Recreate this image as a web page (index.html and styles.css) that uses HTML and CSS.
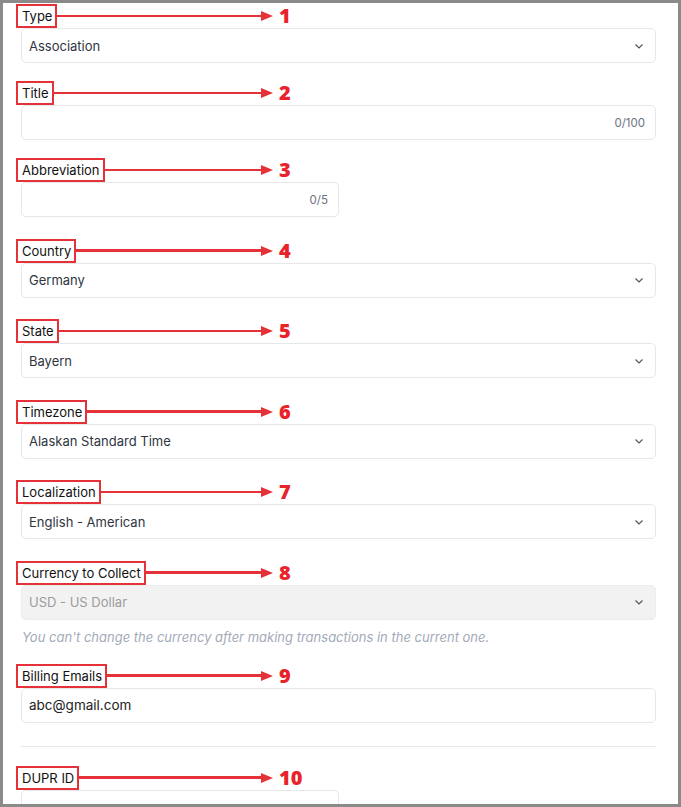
FILE: index.html
```html
<!DOCTYPE html>
<html lang="en">
<head>
    <meta charset="UTF-8">
    <title>Organization settings</title>
    <link rel="stylesheet" href="styles.css">
</head>
<body>
    <div class="frame">
        <form class="settings-form">

            <div class="field tight">
                <div class="annot"><label class="tag">Type</label><span class="arrow"></span></div><span class="num">1</span>
                <div class="box select-box">
                    <span>Association</span>
                    <svg class="chev" width="10" height="10" viewBox="0 0 10 10"><polyline points="1.5,3.5 5,7 8.5,3.5" /></svg>
                </div>
            </div>

            <div class="field tight">
                <div class="annot"><label class="tag">Title</label><span class="arrow"></span></div><span class="num">2</span>
                <div class="box">
                    <input type="text" class="plain-input">
                    <span class="counter">0/100</span>
                </div>
            </div>

            <div class="field">
                <div class="annot"><label class="tag">Abbreviation</label><span class="arrow"></span></div><span class="num">3</span>
                <div class="box half">
                    <input type="text" class="plain-input">
                    <span class="counter">0/5</span>
                </div>
            </div>

            <div class="field">
                <div class="annot"><label class="tag">Country</label><span class="arrow"></span></div><span class="num">4</span>
                <div class="box select-box">
                    <span>Germany</span>
                    <svg class="chev" width="10" height="10" viewBox="0 0 10 10"><polyline points="1.5,3.5 5,7 8.5,3.5" /></svg>
                </div>
            </div>

            <div class="field">
                <div class="annot"><label class="tag">State</label><span class="arrow"></span></div><span class="num">5</span>
                <div class="box select-box">
                    <span>Bayern</span>
                    <svg class="chev" width="10" height="10" viewBox="0 0 10 10"><polyline points="1.5,3.5 5,7 8.5,3.5" /></svg>
                </div>
            </div>

            <div class="field">
                <div class="annot"><label class="tag">Timezone</label><span class="arrow"></span></div><span class="num">6</span>
                <div class="box select-box">
                    <span>Alaskan Standard Time</span>
                    <svg class="chev" width="10" height="10" viewBox="0 0 10 10"><polyline points="1.5,3.5 5,7 8.5,3.5" /></svg>
                </div>
            </div>

            <div class="field">
                <div class="annot"><label class="tag">Localization</label><span class="arrow"></span></div><span class="num">7</span>
                <div class="box select-box">
                    <span>English - American</span>
                    <svg class="chev" width="10" height="10" viewBox="0 0 10 10"><polyline points="1.5,3.5 5,7 8.5,3.5" /></svg>
                </div>
            </div>

            <div class="field with-help">
                <div class="annot"><label class="tag">Currency to Collect</label><span class="arrow"></span></div><span class="num">8</span>
                <div class="box select-box disabled">
                    <span>USD - US Dollar</span>
                    <svg class="chev" width="10" height="10" viewBox="0 0 10 10"><polyline points="1.5,3.5 5,7 8.5,3.5" /></svg>
                </div>
                <p class="help">You can't change the currency after making transactions in the current one.</p>
            </div>

            <div class="field">
                <div class="annot"><label class="tag">Billing Emails</label><span class="arrow"></span></div><span class="num">9</span>
                <div class="box">
                    <input type="text" class="plain-input" value="abc@gmail.com">
                </div>
            </div>

            <hr class="divider">

            <div class="field">
                <div class="annot"><label class="tag">DUPR ID</label><span class="arrow"></span></div><span class="num">10</span>
                <div class="box half">
                    <input type="text" class="plain-input">
                </div>
            </div>

        </form>
    </div>
</body>
</html>
```

FILE: styles.css
```css
html, body {
    margin: 0;
    padding: 0;
    background: #fff;
}

body {
    font-family: Inter, "Noto Sans", sans-serif;
    color: #111;
}

.frame {
    box-sizing: border-box;
    width: 681px;
    height: 807px;
    border: 3px solid #8a8a8a;
    overflow: hidden;
}

.settings-form {
    padding: 1px 22px 0 18px;
}

.field {
    margin-bottom: 21.5px;
}

.field.tight {
    margin-bottom: 18px;
}

.field.with-help {
    margin-bottom: 19px;
}

/* annotation: red box round the label + arrow + number */
.annot {
    display: inline-flex;
    align-items: center;
    width: 257px;
    height: 24px;
    margin-left: -5px;
    vertical-align: top;
}

.tag {
    box-sizing: border-box;
    height: 24px;
    line-height: 20px;
    padding: 0 3px 0 4px;
    border: 2px solid #e53238;
    font-size: 13px;
    color: #111;
    white-space: nowrap;
}

.arrow {
    flex: 1;
    display: flex;
    align-items: center;
}

.arrow::before {
    content: '';
    flex: 1;
    height: 2.5px;
    background: #e53238;
}

.arrow::after {
    content: '';
    border-left: 12px solid #e53238;
    border-top: 5.5px solid transparent;
    border-bottom: 5.5px solid transparent;
}

.num {
    display: inline-block;
    height: 24px;
    line-height: 24px;
    margin-left: 6px;
    font-family: "Open Sans", sans-serif;
    font-weight: 800;
    font-size: 20px;
    color: #e8232b;
    vertical-align: top;
}

.box {
    box-sizing: border-box;
    display: flex;
    align-items: center;
    height: 35px;
    padding: 0 10px 0 7px;
    border: 1px solid #e6e7ea;
    border-radius: 5px;
    background: #fff;
    font-size: 13px;
    color: #2f3642;
}

.box.half {
    width: 318px;
}

.select-box {
    justify-content: space-between;
}

.chev {
    fill: none;
    stroke: #555;
    stroke-width: 1.2;
    margin-right: 1px;
}

.box.disabled {
    background: #f2f2f2;
    border-color: #ececec;
    color: #9c9c9c;
}

.plain-input {
    flex: 1;
    min-width: 0;
    border: none;
    outline: none;
    padding: 0;
    font-family: inherit;
    font-size: 13.5px;
    color: #222;
    background: transparent;
}

.counter {
    font-size: 11.5px;
    color: #6b7280;
}

.help {
    margin: 9px 0 0 1px;
    line-height: 16px;
    font-size: 13px;
    font-style: italic;
    color: #a3aab8;
}

.divider {
    border: none;
    border-top: 1px solid #e6e7ea;
    margin: 23px 0 19px;
}
```
